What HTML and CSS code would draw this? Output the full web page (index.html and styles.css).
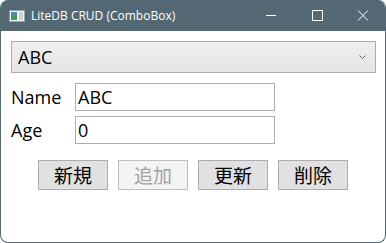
FILE: index.html
```html
<!DOCTYPE html>
<html lang="ja">

<head>
  <meta charset="UTF-8">
  <title>LiteDB CRUD (ComboBox)</title>
  <link rel="stylesheet" href="styles.css">
</head>

<body>
  <div class="window">
    <div class="titlebar">
      <svg class="app-icon" width="16" height="12" viewBox="0 0 16 12">
        <rect x="0.5" y="0.5" width="15" height="11" fill="#f2f2f2" stroke="#9aa3a8" />
        <rect x="2" y="2" width="6" height="8" fill="#4a8fb0" />
        <rect x="2" y="6" width="6" height="4" fill="#3f9a6a" />
        <rect x="10" y="2" width="4" height="8" fill="#c9d1d5" />
      </svg>
      <span class="title">LiteDB CRUD (ComboBox)</span>
      <div class="controls">
        <svg class="ctl" width="46" height="31" viewBox="0 0 46 31">
          <line x1="18" y1="15.5" x2="28" y2="15.5" stroke="#fff" stroke-width="1" />
        </svg>
        <svg class="ctl" width="46" height="31" viewBox="0 0 46 31">
          <rect x="18.5" y="10.5" width="10" height="10" fill="none" stroke="#fff" stroke-width="1" />
        </svg>
        <svg class="ctl" width="46" height="31" viewBox="0 0 46 31">
          <path d="M18 10.5 L28 20.5 M28 10.5 L18 20.5" stroke="#fff" stroke-width="1" />
        </svg>
      </div>
    </div>

    <div class="content">
      <div class="combo">
        <span>ABC</span>
        <svg class="chevron" width="7" height="4" viewBox="0 0 7 4">
          <path d="M0.5 0.5 L3.5 3.5 L6.5 0.5" fill="none" stroke="#606060" stroke-width="1" />
        </svg>
      </div>

      <div class="field-row name-row">
        <label class="field-label">Name</label>
        <div class="textbox">ABC</div>
      </div>
      <div class="field-row age-row">
        <label class="field-label">Age</label>
        <div class="textbox">0</div>
      </div>

      <div class="buttons">
        <button class="btn">新規</button>
        <button class="btn" disabled>追加</button>
        <button class="btn">更新</button>
        <button class="btn">削除</button>
      </div>
    </div>
  </div>
</body>

</html>
```

FILE: styles.css
```css
body {
  margin: 0;
  padding: 0;
  background: #ffffff;
  font-family: "Open Sans", "Noto Sans CJK JP", sans-serif;
}

.window {
  width: 386px;
  height: 243px;
  box-sizing: border-box;
  border: 1px solid #536873;
  border-top: none;
  border-radius: 8px;
  background: #ffffff;
  overflow: hidden;
  display: flex;
  flex-direction: column;
}

.titlebar {
  height: 31px;
  background: #536873;
  display: flex;
  align-items: center;
  color: #ffffff;
  margin: 0 -1px;
}

.app-icon {
  margin-left: 9px;
  margin-right: 6px;
}

.title {
  font-family: "Open Sans", sans-serif;
  font-size: 12px;
  margin-top: -1px;
}

.controls {
  margin-left: auto;
  display: flex;
}

.ctl {
  display: block;
}

.content {
  padding: 10px 9px 0 10px;
}

.combo {
  height: 32px;
  box-sizing: border-box;
  border: 1px solid #acacac;
  background: linear-gradient(#efefef, #e5e5e5);
  display: flex;
  align-items: center;
  padding: 0 9px 0 6px;
  font-size: 18px;
  color: #000;
}

.chevron {
  margin-left: auto;
}

.field-row {
  display: flex;
  align-items: center;
}

.name-row {
  margin-top: 10px;
}

.age-row {
  margin-top: 5px;
}

.field-label {
  width: 64px;
  font-size: 18px;
  color: #000;
}

.textbox {
  width: 200px;
  height: 28px;
  box-sizing: border-box;
  border: 1px solid #abadb3;
  padding-left: 2px;
  font-size: 18px;
  line-height: 26px;
  color: #000;
}

.buttons {
  margin-top: 16px;
  display: flex;
  justify-content: center;
  gap: 10px;
  padding-right: 1px;
}

.btn {
  width: 70px;
  height: 30px;
  padding: 0;
  border: 1px solid #adadad;
  background: #e1e1e1;
  font-family: "Noto Sans CJK JP", sans-serif;
  font-size: 19px;
  color: #000;
  line-height: 26px;
}

.btn:disabled {
  background: #f4f4f4;
  border-color: #bfbfbf;
  color: #a3a3a3;
}
```
